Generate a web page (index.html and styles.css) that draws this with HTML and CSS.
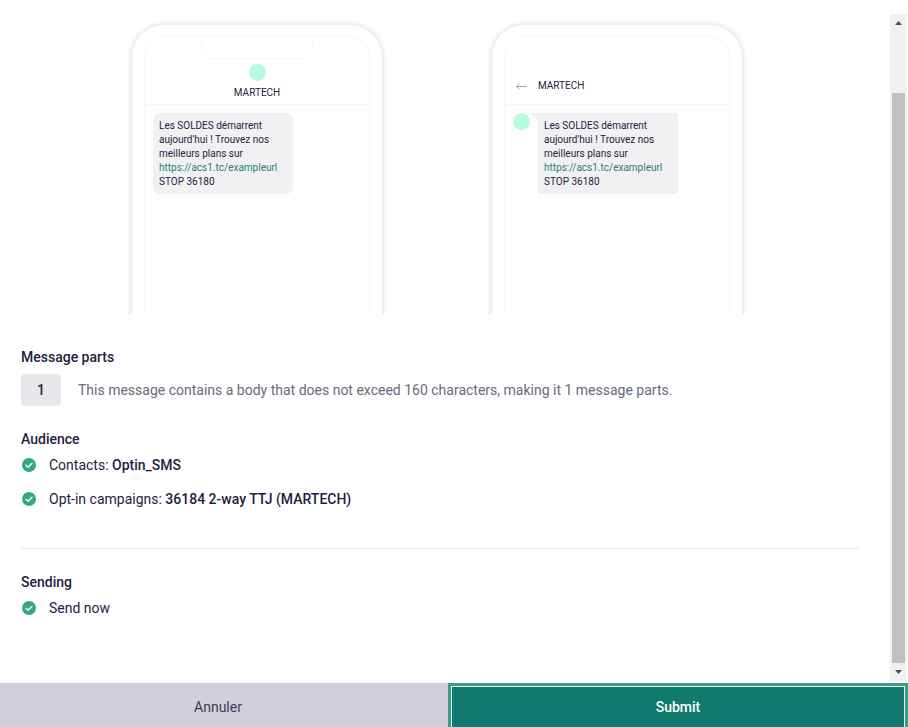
FILE: index.html
```html
<!DOCTYPE html>
<html lang="en">
<head>
<meta charset="utf-8">
<meta name="viewport" content="width=device-width, initial-scale=1">
<title>Message summary</title>
<link rel="stylesheet" href="styles.css">
</head>
<body>
<div class="viewport">
  <main class="content">
    <div class="previews">
      <section class="phone">
        <div class="screen">
          <header class="bar bar-centered">
            <span class="notch"></span>
            <span class="avatar"></span>
            <span>MARTECH</span>
          </header>
          <div class="thread">
            <p class="bubble">Les SOLDES démarrent<br>aujourd'hui ! Trouvez nos<br>meilleurs plans sur<br><a href="#">https://acs1.tc/exampleurl</a><br>STOP 36180</p>
          </div>
        </div>
      </section>
      <section class="phone">
        <div class="screen">
          <header class="bar bar-back">
            <svg class="back" viewBox="0 0 12 10" aria-hidden="true"><path d="M11.5 5.5H1.5M4.5 2.5l-3 3 3 3"/></svg>
            <span>MARTECH</span>
          </header>
          <div class="thread">
            <span class="avatar"></span>
            <svg class="tail" viewBox="0 0 8 8" aria-hidden="true"><path d="M0 0H8V8Z"/></svg>
            <p class="bubble bubble-square">Les SOLDES démarrent<br>aujourd'hui ! Trouvez nos<br>meilleurs plans sur<br><a href="#">https://acs1.tc/exampleurl</a><br>STOP 36180</p>
          </div>
        </div>
      </section>
    </div>
    <section class="parts">
      <h2>Message parts</h2>
      <div class="part-row">
        <span class="count">1</span>
        <p>This message contains a body that does not exceed 160 characters, making it 1 message parts.</p>
      </div>
    </section>
    <section class="audience">
      <h2>Audience</h2>
      <ul class="checks">
        <li><svg class="check" viewBox="0 0 14 14" aria-hidden="true"><circle cx="7" cy="7" r="7"/><path d="M4 7.2l2.1 2L10 5.2"/></svg><span>Contacts: <strong>Optin_SMS</strong></span></li>
        <li><svg class="check" viewBox="0 0 14 14" aria-hidden="true"><circle cx="7" cy="7" r="7"/><path d="M4 7.2l2.1 2L10 5.2"/></svg><span>Opt-in campaigns: <strong>36184 2-way TTJ (MARTECH)</strong></span></li>
      </ul>
    </section>
    <section class="sending">
      <h2>Sending</h2>
      <ul class="checks">
        <li><svg class="check" viewBox="0 0 14 14" aria-hidden="true"><circle cx="7" cy="7" r="7"/><path d="M4 7.2l2.1 2L10 5.2"/></svg><span>Send now</span></li>
      </ul>
    </section>
  </main>
  <div class="scrollbar" aria-hidden="true">
    <svg class="arrow" viewBox="0 0 17 17"><path d="M5 11l3.5-4 3.5 4z"/></svg>
    <span class="thumb"></span>
    <svg class="arrow" viewBox="0 0 17 17"><path d="M5 6l3.5 4L12 6z"/></svg>
  </div>
</div>
<footer class="actions">
  <button type="button" class="cancel">Annuler</button>
  <button type="submit" class="submit">Submit</button>
</footer>
</body>
</html>
```
FILE: styles.css
```css
* {
  box-sizing: border-box;
}

body {
  margin: 0;
  min-height: 100vh;
  display: flex;
  flex-direction: column;
  background: #fff;
  color: #1f2140;
  font-family: Roboto, "Liberation Sans", sans-serif;
  font-size: 14px;
  line-height: 20px;
}

h2, p, ul {
  margin: 0;
  padding: 0;
}

.viewport {
  flex: 1;
  display: flex;
  padding: 14px 1px 2px 0;
}

.content {
  flex: 1;
  min-width: 0;
  padding: 0 31px 0 21px;
}

.previews {
  display: flex;
  justify-content: center;
  gap: 110px;
  height: 300px;
  padding: 11px 6px 0 0;
  overflow: hidden;
}

.phone {
  flex: 0 0 250px;
  height: 340px;
  padding: 11px 12px;
  border-radius: 32px;
  background: #fff;
  box-shadow: 0 0 6px #d4d4d6;
}

.screen {
  height: 100%;
  border: 1px solid #f7f7f8;
  border-radius: 22px;
  font-size: 10px;
  line-height: 14px;
}

.bar {
  display: flex;
  height: 68px;
  border-bottom: 1px solid #f7f7f8;
}

.bar-centered {
  flex-direction: column;
  align-items: center;
}

.notch {
  width: 112px;
  height: 22px;
  border: 1px solid #f7f7f8;
  border-top: 0;
  border-radius: 0 0 10px 10px;
  margin-bottom: 5px;
}

.bar-centered .avatar {
  margin-bottom: 5px;
}

.bar-back {
  align-items: center;
  gap: 11px;
  padding: 30px 10px 0;
}

.back {
  width: 12px;
  height: 10px;
  fill: none;
  stroke: #a6a6ae;
  stroke-width: 1;
}

.avatar {
  flex: none;
  width: 17px;
  height: 17px;
  border-radius: 50%;
  background: #b9fbe1;
}

.thread {
  display: flex;
  align-items: flex-start;
  padding: 8px;
}

.bubble {
  width: 140px;
  padding: 6px 6px 5px;
  border-radius: 7px;
  background: #f1f1f4;
  white-space: nowrap;
}

.bubble-square {
  border-radius: 0 2px 2px 0;
}

.bubble a {
  color: #2b806f;
  text-decoration: none;
}

.tail {
  width: 8px;
  height: 8px;
  fill: #f1f1f4;
}

h2 {
  font-size: 14px;
  font-weight: 500;
  line-height: 20px;
}

strong {
  font-weight: 500;
}

.parts {
  padding-top: 33px;
}

.part-row {
  display: flex;
  align-items: center;
  gap: 17px;
  margin-top: 7px;
  color: #6a6a7c;
}

.count {
  flex: none;
  width: 40px;
  padding: 6px 0;
  border-radius: 4px;
  background: #e6e6eb;
  color: #1f2140;
  font-weight: 500;
  text-align: center;
}

.audience {
  padding: 23px 0 39px;
  border-bottom: 1px solid #e4e4e9;
}

.sending {
  padding-top: 23px;
}

.checks {
  display: flex;
  flex-direction: column;
  gap: 14px;
  margin-top: 6px;
  list-style: none;
}

.checks li {
  display: flex;
  align-items: center;
  gap: 13px;
  padding-left: 1px;
}

.check {
  width: 14px;
  height: 14px;
  fill: #36a583;
}

.check path {
  fill: none;
  stroke: #fff;
  stroke-width: 1.3;
  stroke-linecap: round;
  stroke-linejoin: round;
}

.scrollbar {
  flex: none;
  width: 17px;
  display: flex;
  flex-direction: column;
  background: #f1f1f1;
}

.arrow {
  width: 17px;
  height: 17px;
  fill: #505050;
}

.thumb {
  flex: 1;
  margin: 62px 2px 1px;
  background: #c1c1c1;
}

.actions {
  display: flex;
}

.actions button {
  flex: 1;
  height: 44px;
  padding: 4px 0 0;
  border: 0;
  border-radius: 0;
  font: inherit;
}

.actions .cancel {
  flex: 0 0 calc(50% - 6px);
  padding-right: 12px;
  background: #d0d0da;
  color: #3c3c58;
}

.actions .submit {
  border: 3px solid #36a083;
  border-bottom: 0;
  padding-top: 1px;
  background: #107a6e;
  box-shadow: inset 1px 1px #fff, inset -1px 0 #fff;
  color: #fff;
  font-weight: 500;
}
```
